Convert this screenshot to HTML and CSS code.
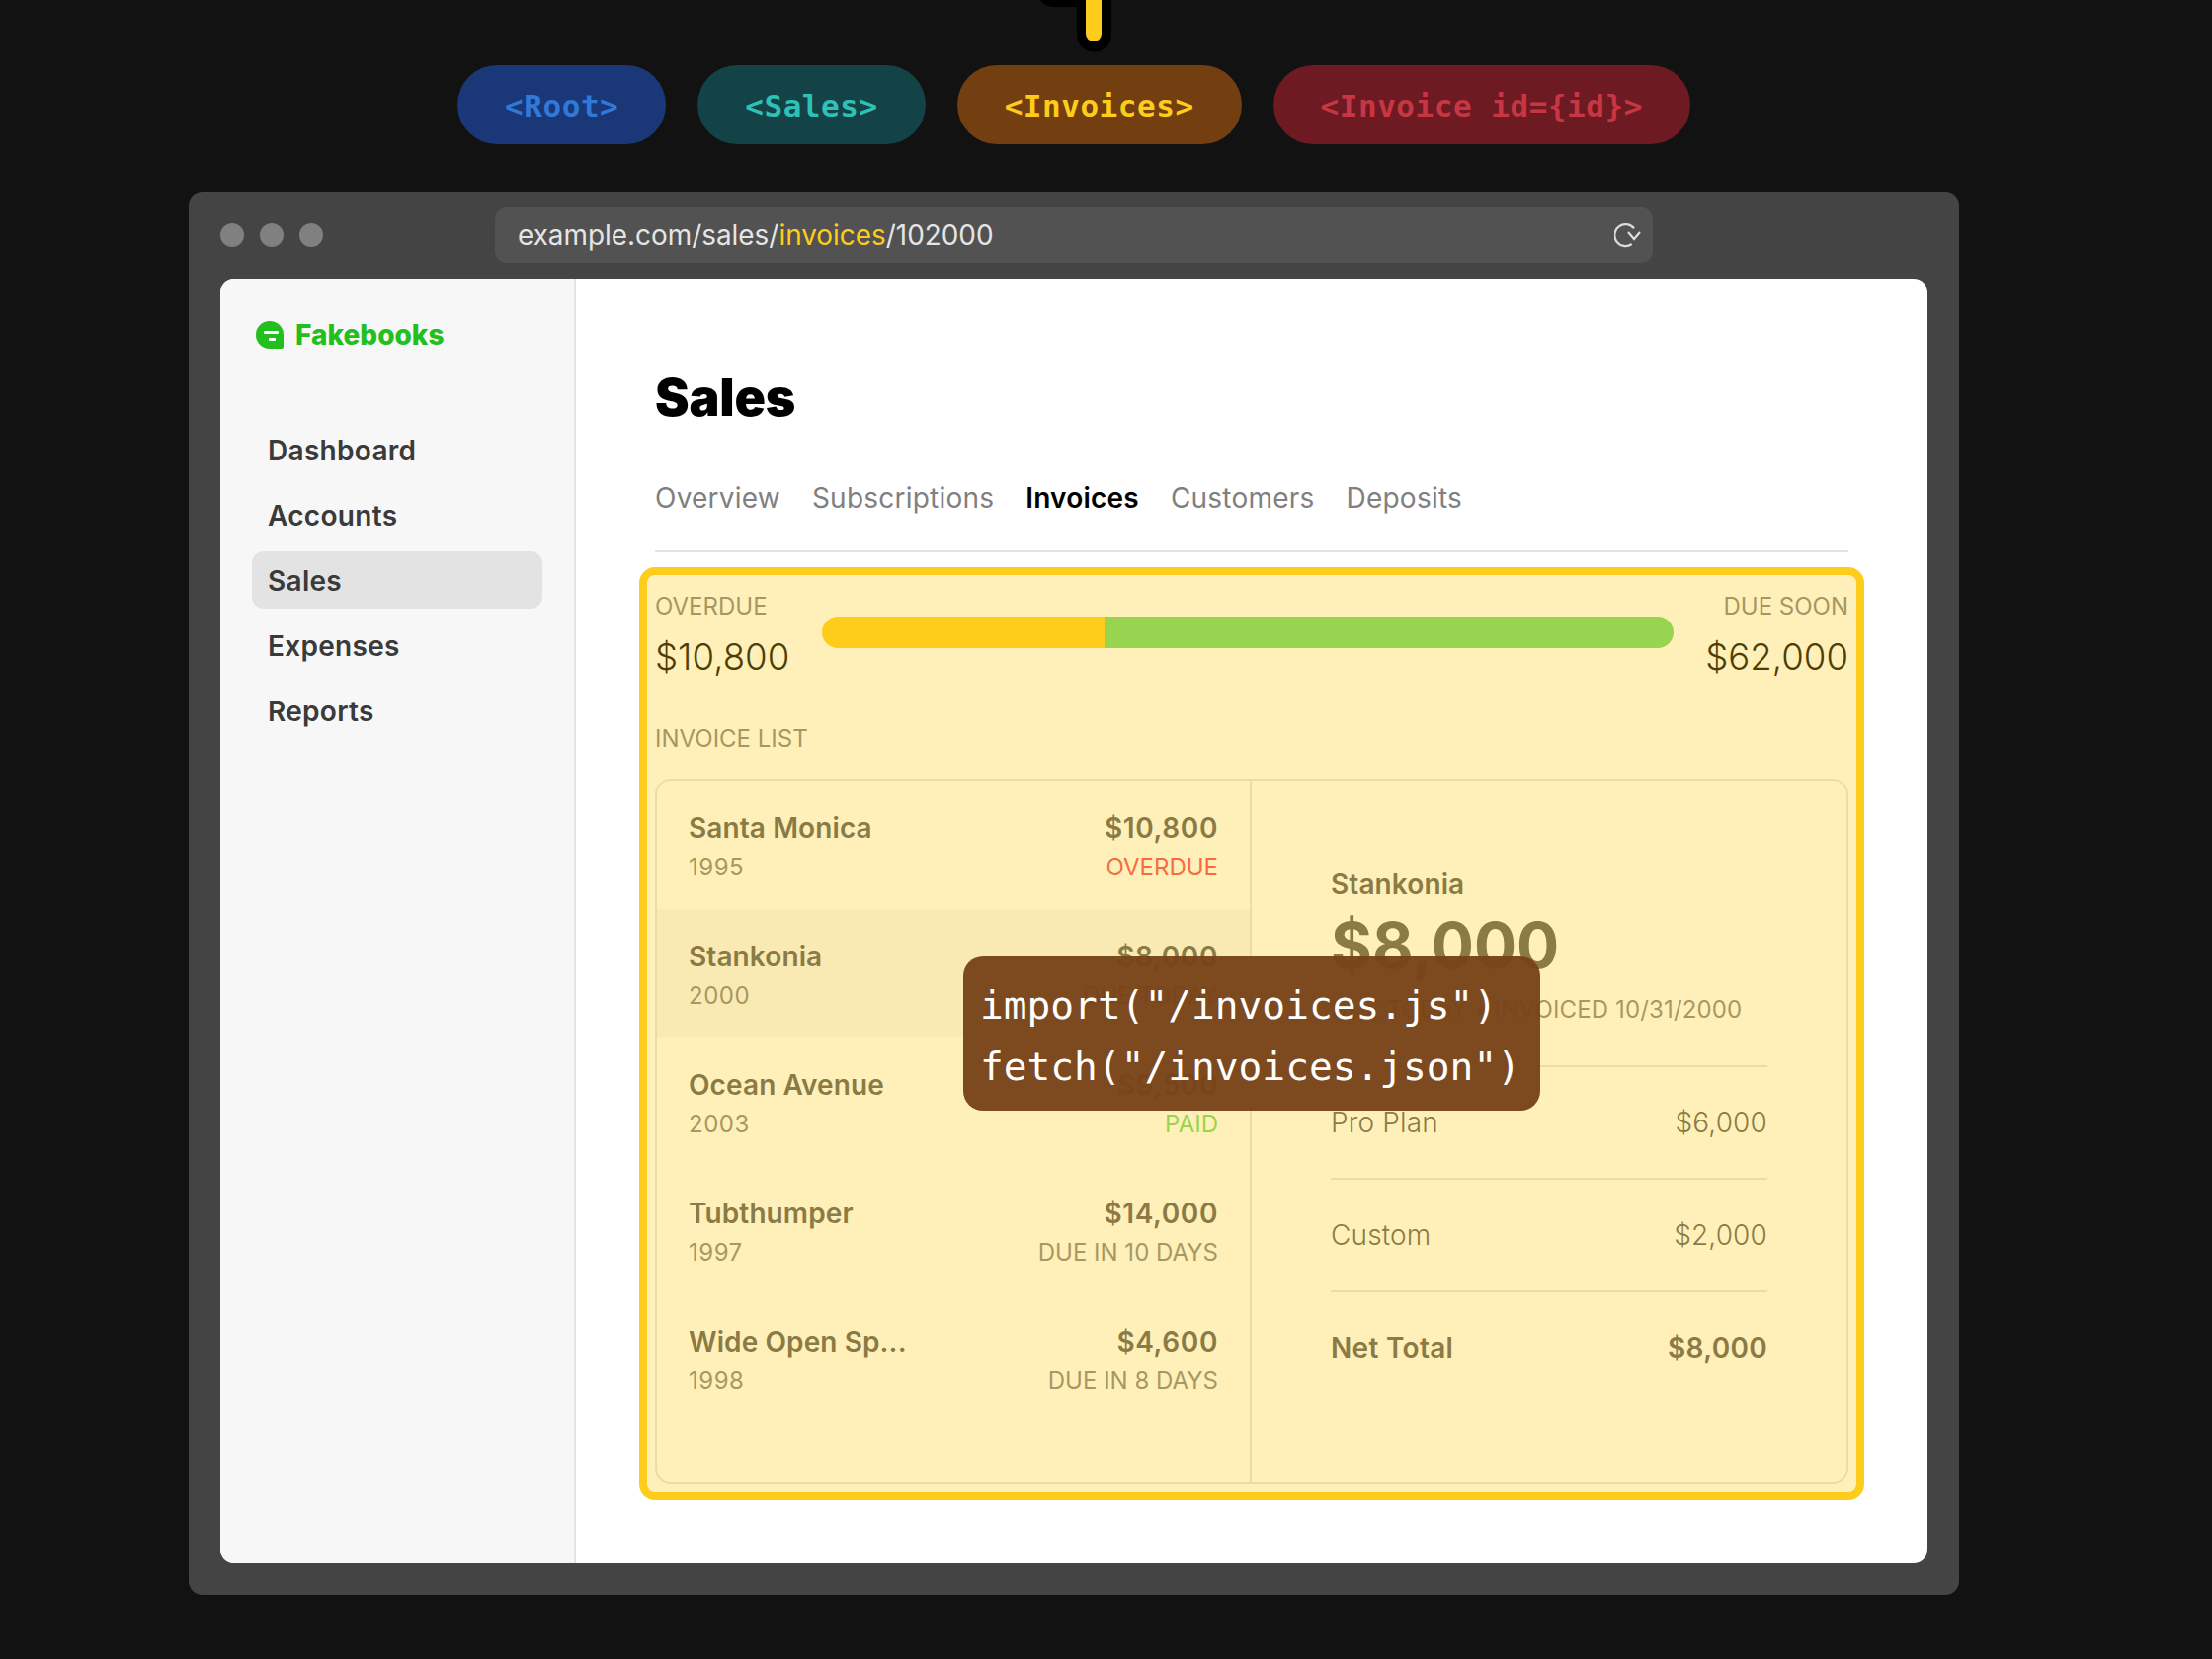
FILE: index.html
```html
<!DOCTYPE html>
<html lang="en">
<head>
    <meta charset="UTF-8">
    <title>Fakebooks</title>
    <link rel="stylesheet" href="styles.css">
</head>
<body>
    <div class="page">
        <svg class="finger" width="80" height="60" viewBox="0 0 80 60">
            <path d="M3 0 C7 5 11 7 17 7 L40 7 L40 0 Z" fill="#000"/>
            <path d="M40 0 L40 35 A17.500 17.500 0 0 0 75 35 L75 0 Z" fill="#000"/>
            <path d="M49 0 L49 34 A8 8 0 0 0 65 34 L65 0 Z" fill="#fecc1b"/>
        </svg>
        <div class="routes">
            <span class="route route-blue">&lt;Root&gt;</span>
            <span class="route route-aqua">&lt;Sales&gt;</span>
            <span class="route route-yellow">&lt;Invoices&gt;</span>
            <span class="route route-red">&lt;Invoice id={id}&gt;</span>
        </div>
        <div class="browser">
            <div class="chrome">
                <div class="dots">
                    <i class="dot"></i>
                    <i class="dot"></i>
                    <i class="dot"></i>
                </div>
                <div class="url">
                    <span>example.com/sales/<b class="url-hit">invoices</b>/102000</span>
                    <svg class="reload" width="28" height="28" viewBox="0 0 28 28" fill="none" stroke="#dcdcdc" stroke-width="2.200">
                        <path d="M20 7.300 A11 11 0 1 0 17.700 23"/>
                        <path d="M14 11 L20 18 L26 11"/>
                    </svg>
                </div>
            </div>
            <div class="app">
                <aside class="sidebar">
                    <div class="logo">
                        <svg width="28" height="28" viewBox="0 0 28 28">
                            <path d="M14 0 A14 14 0 0 1 28 14 L28 26 Q28 28 26 28 L14 28 A14 14 0 0 1 14 0 Z" fill="#23bf1f"/>
                            <rect x="8" y="10" width="15" height="3" rx="1" fill="#fff"/>
                            <rect x="13" y="17" width="7" height="3" rx="1" fill="#fff"/>
                        </svg>
                        <span>Fakebooks</span>
                    </div>
                    <nav class="nav">
                        <a class="nav-item">Dashboard</a>
                        <a class="nav-item">Accounts</a>
                        <a class="nav-item nav-active">Sales</a>
                        <a class="nav-item">Expenses</a>
                        <a class="nav-item">Reports</a>
                    </nav>
                </aside>
                <main class="main">
                    <h1 class="title">Sales</h1>
                    <div class="tabs">
                        <a class="tab">Overview</a>
                        <a class="tab">Subscriptions</a>
                        <a class="tab tab-active">Invoices</a>
                        <a class="tab">Customers</a>
                        <a class="tab">Deposits</a>
                    </div>
                    <section class="outlet">
                        <div class="totals">
                            <div>
                                <div class="label">Overdue</div>
                                <div class="amount">$10,800</div>
                            </div>
                            <div class="bar">
                                <div class="bar-overdue"></div>
                                <div class="bar-soon"></div>
                            </div>
                            <div class="totals-right">
                                <div class="label">Due soon</div>
                                <div class="amount">$62,000</div>
                            </div>
                        </div>
                        <div class="label list-label">Invoice list</div>
                        <div class="panel">
                            <div class="list">
                                <div class="row">
                                    <div>
                                        <div class="row-name">Santa Monica</div>
                                        <div class="row-sub row-year">1995</div>
                                    </div>
                                    <div class="row-end">
                                        <div class="row-name">$10,800</div>
                                        <div class="row-sub red">OVERDUE</div>
                                    </div>
                                </div>
                                <div class="row row-active">
                                    <div>
                                        <div class="row-name">Stankonia</div>
                                        <div class="row-sub row-year">2000</div>
                                    </div>
                                    <div class="row-end">
                                        <div class="row-name">$8,000</div>
                                        <div class="row-sub">DUE TODAY</div>
                                    </div>
                                </div>
                                <div class="row">
                                    <div>
                                        <div class="row-name">Ocean Avenue</div>
                                        <div class="row-sub row-year">2003</div>
                                    </div>
                                    <div class="row-end">
                                        <div class="row-name">$9,500</div>
                                        <div class="row-sub green">PAID</div>
                                    </div>
                                </div>
                                <div class="row">
                                    <div>
                                        <div class="row-name">Tubthumper</div>
                                        <div class="row-sub row-year">1997</div>
                                    </div>
                                    <div class="row-end">
                                        <div class="row-name">$14,000</div>
                                        <div class="row-sub">DUE IN 10 DAYS</div>
                                    </div>
                                </div>
                                <div class="row">
                                    <div>
                                        <div class="row-name">Wide Open Sp...</div>
                                        <div class="row-sub row-year">1998</div>
                                    </div>
                                    <div class="row-end">
                                        <div class="row-name">$4,600</div>
                                        <div class="row-sub">DUE IN 8 DAYS</div>
                                    </div>
                                </div>
                            </div>
                            <div class="detail">
                                <div class="row-name">Stankonia</div>
                                <div class="detail-total">$8,000</div>
                                <div class="row-sub detail-sub">DUE TODAY • INVOICED 10/31/2000</div>
                                <div class="line">
                                    <span>Pro Plan</span>
                                    <span>$6,000</span>
                                </div>
                                <div class="line">
                                    <span>Custom</span>
                                    <span>$2,000</span>
                                </div>
                                <div class="line line-total">
                                    <span>Net Total</span>
                                    <span>$8,000</span>
                                </div>
                            </div>
                        </div>
                        <div class="outlet-tint"></div>
                        <div class="tip">
                            <div>import("/invoices.js")</div>
                            <div>fetch("/invoices.json")</div>
                        </div>
                    </section>
                </main>
            </div>
        </div>
    </div>
</body>
</html>
```
FILE: styles.css
```css
*{
    box-sizing: border-box;
    margin: 0;
    padding: 0;
}
body{
    background: #121212;
    font-family: Inter, "Liberation Sans", sans-serif;
    overflow: hidden;
}
.page{
    position: relative;
    width: 1792px;
    margin-left: 191px;
    padding-top: 66px;
}
.finger{
    position: absolute;
    top: 0;
    left: 859px;
}

/* route pills */
.routes{
    display: flex;
    justify-content: center;
    gap: 32px;
}
.route{
    height: 80px;
    padding: 0 48px;
    border-radius: 40px;
    font-family: "DejaVu Sans Mono", monospace;
    font-size: 31px;
    font-weight: 700;
    letter-spacing: 0.53px;
    line-height: 83px;
    white-space: nowrap;
}
.route-blue{
    background: #1a3778;
    color: #3179d8;
}
.route-aqua{
    background: #134347;
    color: #2fc0b8;
}
.route-yellow{
    background: #743f10;
    color: #fecc1b;
}
.route-red{
    background: #6d1a22;
    color: #c73642;
}

/* browser window */
.browser{
    margin-top: 48px;
    padding: 0 32px 32px;
    background: #444444;
    border-radius: 14px;
}
.chrome{
    display: flex;
    align-items: center;
    height: 88px;
}
.dots{
    display: flex;
    gap: 16px;
    width: 278px;
}
.dot{
    width: 24px;
    height: 24px;
    border-radius: 50%;
    background: #808080;
}
.url{
    display: flex;
    align-items: center;
    justify-content: space-between;
    width: 1172px;
    height: 56px;
    padding: 0 11px 0 23px;
    border-radius: 12px;
    background: #525252;
    color: #e5e5e5;
    font-size: 27.900px;
}
.url-hit{
    color: #fecc1b;
    font-weight: 400;
}
.app{
    display: flex;
    height: 1300px;
    background: #fff;
    border-radius: 14px;
    overflow: hidden;
}

/* sidebar */
.sidebar{
    flex: none;
    width: 360px;
    padding: 40px 32px 0;
    background: #f7f7f7;
    border-right: 2px solid #e3e3e3;
}
.logo{
    display: flex;
    align-items: center;
    gap: 12px;
    padding-left: 4px;
    color: #23bf1f;
    font-size: 28px;
    font-weight: 800;
}
.nav{
    display: flex;
    flex-direction: column;
    gap: 8px;
    margin-top: 70px;
}
.nav-item{
    height: 58px;
    padding-left: 16px;
    border-radius: 12px;
    color: #3a3a3a;
    font-size: 28px;
    font-weight: 600;
    letter-spacing: 0.3px;
    line-height: 60px;
}
.nav-active{
    background: #e3e3e3;
}

/* main column */
.main{
    flex: 1;
    padding: 80px 80px 0;
}
.title{
    color: #000;
    font-size: 52px;
    font-weight: 900;
    letter-spacing: -0.2px;
    line-height: 82px;
}
.tabs{
    display: flex;
    gap: 32px;
    margin-top: 40px;
    padding-bottom: 33px;
    border-bottom: 2px solid #e3e3e3;
}
.tab{
    color: #808080;
    font-size: 28px;
    letter-spacing: 0.22px;
    line-height: 40px;
}
.tab-active{
    color: #000;
    font-weight: 600;
}

/* highlighted route */
.outlet{
    position: relative;
    margin-top: 31px;
}
.outlet-tint{
    position: absolute;
    top: -16px;
    right: -16px;
    bottom: -16px;
    left: -16px;
    border: 8px solid #fecc1b;
    border-radius: 16px;
    background: rgba(254, 204, 27, 0.3);
}
.totals{
    display: flex;
    gap: 32px;
    padding-top: 8px;
}
.totals-right{
    text-align: right;
}
.label{
    color: #808080;
    font-size: 24px;
    line-height: 32px;
    text-transform: uppercase;
}
.amount{
    margin-top: 11px;
    color: #000;
    font-size: 36.600px;
    font-weight: 300;
    line-height: 48px;
}
.bar{
    display: flex;
    flex: 1;
    height: 32px;
    margin: 26px 0 0 1px;
    border-radius: 16px;
    overflow: hidden;
}
.bar-overdue{
    width: 33.200%;
    background: #fecc1b;
}
.bar-soon{
    flex: 1;
    background: #6bd968;
}
.list-label{
    margin-top: 43px;
}
.panel{
    display: flex;
    height: 714px;
    margin-top: 24px;
    border: 2px solid #e3e3e3;
    border-radius: 16px;
    overflow: hidden;
}
.list{
    flex: none;
    width: 602px;
    border-right: 2px solid #e3e3e3;
}
.row{
    display: flex;
    justify-content: space-between;
    height: 130px;
    padding: 28px 32px 0;
}
.row-active{
    background: #f7f7f7;
}
.row-end{
    text-align: right;
}
.row-end .row-name{
    letter-spacing: 0.6px;
}
.row-name{
    color: #585858;
    font-size: 28px;
    font-weight: 600;
    letter-spacing: 0.1px;
    line-height: 40px;
}
.row-sub{
    margin-top: 4px;
    color: #828282;
    font-size: 24px;
    line-height: 32px;
}
.row-year{
    letter-spacing: 0.5px;
}
.red{
    color: #f44250;
}
.green{
    color: #6bd968;
}
.detail{
    flex: 1;
    padding: 85px 80px 0;
}
.detail-total{
    margin-top: 2px;
    color: #585858;
    font-size: 64px;
    font-weight: 700;
    line-height: 80px;
}
.detail-sub{
    margin-top: 9px;
    padding-bottom: 40px;
    letter-spacing: 0.14px;
}
.line{
    display: flex;
    align-items: center;
    justify-content: space-between;
    height: 114px;
    border-top: 2px solid #e3e3e3;
    color: #585858;
    font-size: 28px;
    font-weight: 300;
    letter-spacing: 0.15px;
}
.line-total{
    font-weight: 600;
    letter-spacing: 0.3px;
}

/* import / fetch tooltip */
.tip{
    position: absolute;
    top: 378px;
    left: 312px;
    width: 584px;
    height: 156px;
    padding: 18px 17px 0;
    border-radius: 20px;
    background: rgba(120, 66, 24, 0.96);
    color: #fff;
    font-family: "DejaVu Sans Mono", monospace;
    font-size: 39.500px;
    line-height: 62px;
    white-space: nowrap;
}
```
